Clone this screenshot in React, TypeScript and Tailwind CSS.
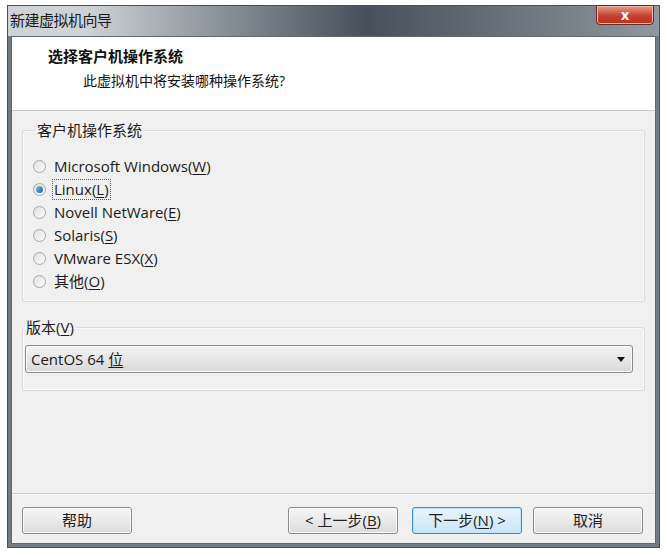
import React from "react";

const FONT = { fontFamily: '"Open Sans", "Noto Sans CJK SC", sans-serif' };

type Os = { label: string; key: string };

const systems: Os[] = [
  { label: "Microsoft Windows", key: "W" },
  { label: "Linux", key: "L" },
  { label: "Novell NetWare", key: "E" },
  { label: "Solaris", key: "S" },
  { label: "VMware ESX", key: "X" },
  { label: "其他", key: "O" },
];

function Mnemonic({ k }: { k: string }) {
  return (
    <>
      (<span className="underline underline-offset-2">{k}</span>)
    </>
  );
}

function Radio({ checked }: { checked: boolean }) {
  return (
    <span className="flex h-[13px] w-[13px] shrink-0 items-center justify-center rounded-full border border-[#a9a9a9] bg-[image:linear-gradient(135deg,#e0e0e0,#fbfbfb)]">
      {checked && (
        <span className="h-[7px] w-[7px] rounded-full bg-[image:linear-gradient(135deg,#7cc8f0,#155f96)]" />
      )}
    </span>
  );
}

function Button({ children, primary }: { children: React.ReactNode; primary?: boolean }) {
  return (
    <button
      className={
        "flex h-[27px] w-[110px] items-center justify-center rounded-[3px] border text-[15px] text-[#222] " +
        (primary
          ? "border-[#3c8ccd] bg-[image:linear-gradient(180deg,#eaf6fd,#c8e4f6)] shadow-[inset_0_0_0_1px_#bfe3f8]"
          : "border-[#8a8a8a] bg-[image:linear-gradient(180deg,#f6f6f6,#dcdcdc)] shadow-[inset_0_0_0_1px_#fbfbfb]")
      }
    >
      {children}
    </button>
  );
}

export default function App() {
  return (
    <div className="h-[557px] w-[667px] bg-white pl-[7px] pt-[5px]" style={FONT}>
      <div className="h-[543px] w-[653px] border border-[#4b5158] bg-[#737b82]">
        {/* title bar: light on the left, dark slate in the middle, grey at the right */}
        <div className="flex h-[30px] w-full items-start justify-between bg-linear-to-r from-[#cfd3d6] from-12% via-[#46515b] via-55% to-[#8f989e] to-100% pl-[2px] pr-[5px] pt-[3px]">
          <span className="text-[15px] tracking-[-0.5px] text-[#1b1b1b]">新建虚拟机向导</span>
          <div className="-mt-[4px] flex h-[20px] w-[58px] items-center justify-center rounded-b-[4px] border border-[#6d2a22] bg-[image:linear-gradient(180deg,#e49a8a,#c8412e_55%,#b8301e)] shadow-[inset_0_0_0_1px_#f0b4a6]">
            <span className="text-[14px] font-bold leading-none text-white">x</span>
          </div>
        </div>

        {/* client area */}
        <div className="mx-[3px] flex h-[508px] flex-col border border-[#5f666c] bg-[#f0f0f0]">
          {/* header */}
          <div className="h-[74px] shrink-0 border-b border-[#c9c9c9] bg-white pl-[36px] pt-[9px]">
            <div className="text-[15px] font-bold leading-[20px] text-[#111]">选择客户机操作系统</div>
            <div className="mt-[5px] pl-[35px] text-[14px] leading-[20px] text-[#111]">此虚拟机中将安装哪种操作系统?</div>
          </div>

          {/* body */}
          <div className="flex flex-1 flex-col px-[10px] pt-[10px]">
            <fieldset className="h-[181px] rounded-[3px] border border-[#dadada] px-[10px] pt-[16px] shadow-[inset_0_0_0_1px_#fbfbfb]">
              <legend className="ml-[2px] px-[2px] text-[15px] leading-[18px] text-[#1b1b1b]">客户机操作系统</legend>
              <div className="flex flex-col">
                {systems.map((s, i) => (
                  <div key={s.key} className="flex h-[23px] items-center gap-[6px] text-[15px] text-[#1b1b1b]">
                    <Radio checked={i === 1} />
                    <span className={i === 1 ? "border border-dotted border-[#555] px-[1px] leading-[19px]" : "px-[2px]"}>
                      {s.label}
                      <Mnemonic k={s.key} />
                    </span>
                  </div>
                ))}
              </div>
            </fieldset>

            <fieldset className="mt-[16px] h-[73px] rounded-[3px] border border-[#dadada] px-[2px] shadow-[inset_0_0_0_1px_#fbfbfb]">
              <legend className="ml-[-1px] px-[2px] text-[15px] leading-[18px] text-[#1b1b1b]">
                版本<Mnemonic k="V" />
              </legend>
              <div className="mt-[9px] flex h-[28px] w-[608px] items-center justify-between rounded-[3px] border border-[#8b8b8b] bg-[image:linear-gradient(180deg,#f4f4f4,#d9d9d9)] pl-[5px] pr-[7px] shadow-[inset_0_0_0_1px_#fbfbfb]">
                <span className="text-[15px] text-[#1b1b1b]">
                  CentOS 64 <span className="underline underline-offset-2">位</span>
                </span>
                <svg width="8" height="5" viewBox="0 0 8 5">
                  <path d="M0 0h8L4 5z" fill="#111" />
                </svg>
              </div>
            </fieldset>
          </div>

          {/* buttons */}
          <div className="flex h-[50px] shrink-0 items-center border-t border-[#cfcfcf] pl-[10px] pr-[12px] pt-[4px] shadow-[inset_0_1px_0_#fafafa]">
            <Button>帮助</Button>
            <div className="ml-auto flex gap-[14px]">
              <Button>
                &lt; 上一步<Mnemonic k="B" />
              </Button>
              <Button primary>
                下一步<Mnemonic k="N" /> &gt;
              </Button>
            </div>
            <div className="ml-[11px]">
              <Button>取消</Button>
            </div>
          </div>
        </div>
      </div>
    </div>
  );
}
